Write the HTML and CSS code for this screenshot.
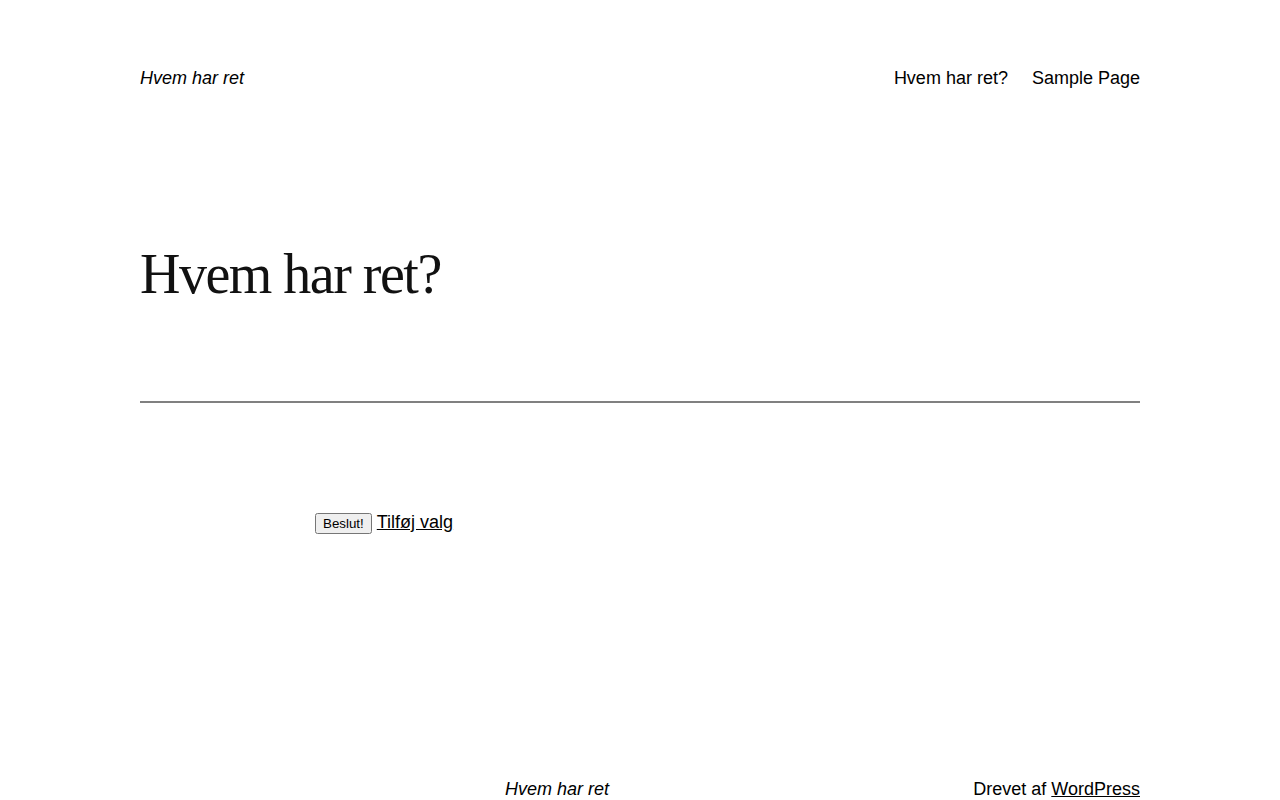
FILE: index.html
```html
<!DOCTYPE html>
<html lang="da">
<head>
    <meta charset="UTF-8">
    <meta name="viewport" content="width=device-width, initial-scale=1.0">
    <title>Hvem har ret?</title>
    <link rel="stylesheet" href="styles.css">
</head>
<body>

<div class="site">
    <!-- Sidehoved -->
    <header class="site-header">
        <a class="site-title" href="#">Hvem har ret</a>
        <nav class="main-nav">
            <a href="#">Hvem har ret?</a>
            <a href="#">Sample Page</a>
        </nav>
    </header>

    <main class="content">
        <h1 class="page-title">Hvem har ret?</h1>
        <hr class="separator">

        <form class="poll" onsubmit="return false">
            <button type="submit">Beslut!</button>
            <a class="add-option" href="#">Tilføj valg</a>
        </form>
    </main>

    <footer class="site-footer">
        <a class="footer-title" href="#">Hvem har ret</a>
        <p class="credit">Drevet af <a href="#">WordPress</a></p>
    </footer>
</div>

</body>
</html>
```

FILE: styles.css
```css
body {
    margin: 0;
    font-family: "Liberation Sans", Arial, sans-serif;
    font-size: 18px;
    color: #000;
    background-color: #fff;
}
a {
    color: #000;
}
.site {
    width: 1000px;
    margin: 0 auto;
}
.site-header {
    display: flex;
    justify-content: space-between;
    align-items: center;
    padding-top: 67px;
    height: 22px;
}
.site-title {
    font-style: italic;
    text-decoration: none;
}
.main-nav {
    display: flex;
    gap: 24px;
}
.main-nav a {
    text-decoration: none;
}
.content {
    padding-top: 150px;
}
.page-title {
    margin: 0;
    font-family: "Liberation Serif", "Times New Roman", serif;
    font-weight: normal;
    font-size: 56px;
    line-height: 70px;
    letter-spacing: -1.5px;
    color: #111;
}
.separator {
    margin: 92px 0 0;
    border: none;
    height: 2px;
    background-color: #808080;
}
.poll {
    display: flex;
    align-items: center;
    gap: 5px;
    margin-top: 108px;
    padding-left: 175px;
}
.poll button {
    font-family: "Liberation Sans", Arial, sans-serif;
    font-size: 13.33px;
    padding: 1px 6px;
    margin-top: 2px;
}
.add-option {
    font-size: 18px;
}
.site-footer {
    display: flex;
    align-items: center;
    margin-top: 245px;
}
.footer-title {
    font-style: italic;
    text-decoration: none;
    margin-left: 365px;
}
.credit {
    margin: 0 0 0 auto;
}
```
